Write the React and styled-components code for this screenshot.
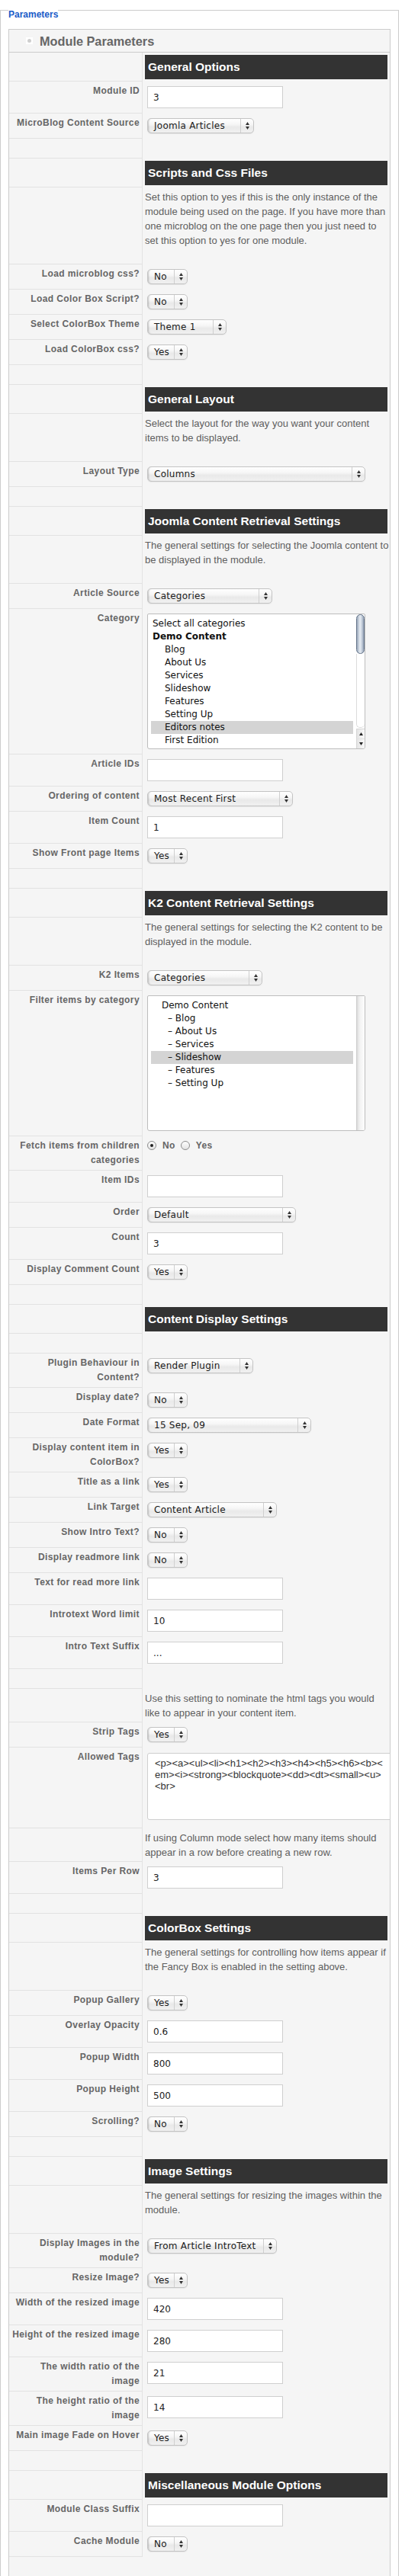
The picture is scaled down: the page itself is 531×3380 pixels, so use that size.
import React from 'react';
import styled, { createGlobalStyle } from 'styled-components';

const GlobalStyle = createGlobalStyle`
  html, body { margin: 0; padding: 0; background: #fff; }
  body { font-family: "Liberation Sans", Arial, sans-serif; }
  * { box-sizing: border-box; }
`;

const Fieldset = styled.fieldset`
  margin: 0 8px 0 0;
  padding: 12px 10px 0 10px;
  border: 1px solid #cccccc;
  border-bottom: none;
  min-width: 0;
`;

const Legend = styled.legend`
  padding: 12px 0 0 0;
  margin: 0;
  font: bold 12px/14px "Liberation Sans", Arial, sans-serif;
  color: #1a5cc8;
  background: #fff;
`;

const Panel = styled.div`
  border: 1px solid #cccccc;
  border-bottom: none;
  background: #f5f5f5;
  padding-bottom: 60px;
`;

const PanelHeader = styled.div`
  height: 30px;
  display: flex;
  align-items: center;
  gap: 9px;
  padding-left: 22px;
  border-bottom: 1px solid #cccccc;
`;

const Bullet = styled.span`
  width: 9px;
  height: 9px;
  background: #fff;
  display: flex;
  align-items: center;
  justify-content: center;
  &::before {
    content: '';
    width: 5px;
    height: 5px;
    border-radius: 50%;
    background: #cfcfcf;
  }
`;

const PanelTitle = styled.h2`
  margin: 0;
  font: bold 16.3px/20px "Liberation Sans", Arial, sans-serif;
  color: #666;
`;

const Row = styled.div`
  display: grid;
  grid-template-columns: 175px 1fr;
`;

const Label = styled.div`
  padding: 3px 3px 3px 3px;
  text-align: right;
  font: bold 12px/19px "Liberation Sans", Arial, sans-serif;
  letter-spacing: 0.4px;
  color: #666;
  border-right: 1px solid #e2e2e2;
  border-bottom: 1px solid #e2e2e2;
  min-height: 26px;
`;

const LabelLine = styled.div`
  white-space: nowrap;
`;

const Value = styled.div`
  display: flex;
  flex-direction: column;
  align-items: flex-start;
  padding: ${p =>
    p.$kind === 'header' ? '3px 3px 3px 3px'
    : p.$kind === 'desc' ? '3px 0 22px 3px'
    : p.$kind === 'note' ? '3px 0 3px 3px'
    : p.$kind === 'empty' ? '0'
    : '6px 0 7px 6px'};
`;

const SectionBar = styled.h3`
  margin: 0;
  align-self: stretch;
  height: 32px;
  background: #333333;
  color: #fff;
  padding-left: 4px;
  font: bold 15.5px/32px "Liberation Sans", Arial, sans-serif;
`;

const DescText = styled.p`
  margin: 0;
  font: 13px/19px "Liberation Sans", Arial, sans-serif;
  color: #5e5e5e;
`;

const DescLine = styled.span`
  display: block;
  white-space: nowrap;
`;

const TextInput = styled.input`
  width: 178px;
  height: 29px;
  margin: 0;
  padding: 0 7px;
  border: 1px solid #cfcfcf;
  background: #fff;
  font: 12px "DejaVu Sans", sans-serif;
  color: #222;
  outline: none;
`;

const SelectBox = styled.div`
  width: ${p => p.$w}px;
  height: 20px;
  display: flex;
  align-items: stretch;
  border: 1px solid #c4c4c4;
  border-radius: 5px;
  background: linear-gradient(#ffffff 0%, #f6f6f6 40%, #e9e9e9 60%, #f1f1f1 100%);
  box-shadow: inset 2px 0 2px -1px rgba(0, 0, 0, 0.2), 0 1px 1px rgba(0, 0, 0, 0.06);
  font: 12px/18px "DejaVu Sans", sans-serif;
  letter-spacing: 0.25px;
  color: #1a1a1a;
  overflow: hidden;
`;

const SelectValue = styled.span`
  flex: 1;
  padding-left: 8px;
  white-space: nowrap;
  overflow: hidden;
`;

const SelectArrow = styled.span`
  width: 17px;
  border-left: 1px solid #cfcfcf;
  display: flex;
  align-items: center;
  justify-content: center;
`;

const ListBox = styled.div`
  width: 286px;
  height: 178px;
  border: 1px solid #bdbdbd;
  border-radius: 2px 2px 3px 3px;
  background: #fff;
  display: flex;
  overflow: hidden;
  font: 12px/17px "DejaVu Sans", sans-serif;
  color: #111;
`;

const ListItems = styled.div`
  flex: 1;
  padding: 4px 4px 0 4px;
  overflow: hidden;
`;

const ListItem = styled.div`
  height: 17px;
  padding-left: ${p => 2 + (p.$indent || 0)}px;
  white-space: nowrap;
  font-weight: ${p => (p.$bold ? 'bold' : 'normal')};
  background: ${p => (p.$selected ? '#d4d4d4' : 'transparent')};
`;

const ScrollColumn = styled.div`
  width: 11px;
  display: flex;
  flex-direction: column;
`;

const ScrollThumb = styled.div`
  height: 52px;
  border: 1px solid #66758a;
  border-radius: 6px;
  background: linear-gradient(to right, #9aa8bb, #e8edf3 45%, #c9d2de 70%, #8f9db1);
`;

const ScrollRest = styled.div`
  flex: 1;
  border-left: 1px solid #dcdcdc;
  border-radius: 0 0 5px 5px;
  border-bottom: 1px solid #dcdcdc;
  margin-bottom: 1px;
`;

const ScrollButton = styled.div`
  height: 13px;
  border-left: 1px solid #d6d6d6;
  border-top: ${p => (p.$first ? '1px solid #d6d6d6' : '1px solid #e2e2e2')};
  background: linear-gradient(to right, #e4e4e4, #fafafa);
  display: flex;
  align-items: center;
  justify-content: center;
`;

const PlainTrack = styled.div`
  width: 11px;
  background: linear-gradient(to right, #c8c8c8 0, #e3e3e3 2px, #f3f3f3 5px, #fdfdfd 100%);
`;

const RadioGroup = styled.div`
  display: flex;
  align-items: center;
  height: 12px;
  font: bold 12px/12px "Liberation Sans", Arial, sans-serif;
  letter-spacing: 0.4px;
  color: #666;
`;

const RadioDot = styled.span`
  width: 12px;
  height: 12px;
  border-radius: 50%;
  border: 1px solid #8c8c8c;
  background: linear-gradient(#fdfdfd, #e3e3e3);
  display: flex;
  align-items: center;
  justify-content: center;
  margin-right: 8px;
  &::after {
    content: '';
    width: 4px;
    height: 4px;
    border-radius: 50%;
    background: ${p => (p.$checked ? '#222' : 'transparent')};
  }
`;

const RadioText = styled.span`
  margin-right: 7px;
`;

const TagsArea = styled.textarea`
  display: block;
  width: 319px;
  height: 88px;
  margin: 1px 0 4px 0;
  padding: 5px 4px 0 9px;
  border: 1px solid #cfcfcf;
  border-radius: 3px 0 0 3px;
  background: #fff;
  font: 13px/15px "Liberation Sans", Arial, sans-serif;
  color: #333;
  resize: none;
  overflow: hidden;
  white-space: pre;
  outline: none;
`;

const Arrows = () => (
  <svg width="5" height="10" viewBox="0 0 5 10">
    <path d="M0 4 L2.5 0 L5 4 Z M0 6 L5 6 L2.5 10 Z" fill="#333" />
  </svg>
);

const Tri = ({ up }) => (
  <svg width="5" height="4" viewBox="0 0 5 4">
    <path d={up ? 'M0 4 L2.5 0 L5 4 Z' : 'M0 0 L5 0 L2.5 4 Z'} fill="#222" />
  </svg>
);

const Select = ({ value, w }) => (
  <SelectBox $w={w}>
    <SelectValue>{value}</SelectValue>
    <SelectArrow><Arrows /></SelectArrow>
  </SelectBox>
);

const joomlaCats = [
  { text: 'Select all categories' },
  { text: 'Demo Content', bold: true },
  { text: 'Blog', indent: 16 },
  { text: 'About Us', indent: 16 },
  { text: 'Services', indent: 16 },
  { text: 'Slideshow', indent: 16 },
  { text: 'Features', indent: 16 },
  { text: 'Setting Up', indent: 16 },
  { text: 'Editors notes', indent: 16, selected: true },
  { text: 'First Edition', indent: 16 },
];

const k2Cats = [
  { text: 'Demo Content', indent: 12 },
  { text: '– Blog', indent: 20 },
  { text: '– About Us', indent: 20 },
  { text: '– Services', indent: 20 },
  { text: '– Slideshow', indent: 20, selected: true },
  { text: '– Features', indent: 20 },
  { text: '– Setting Up', indent: 20 },
];

const rows = [
  { t: 'header', text: 'General Options' },
  { t: 'input', label: ['Module ID'], value: '3' },
  { t: 'select', label: ['MicroBlog Content Source'], value: 'Joomla Articles', w: 140 },
  { t: 'empty' },
  { t: 'header', text: 'Scripts and Css Files' },
  { t: 'desc', lines: [
    'Set this option to yes if this is the only instance of the',
    'module being used on the page. If you have more than',
    'one microblog on the one page then you just need to',
    'set this option to yes for one module.',
  ] },
  { t: 'select', label: ['Load microblog css?'], value: 'No', w: 53 },
  { t: 'select', label: ['Load Color Box Script?'], value: 'No', w: 53 },
  { t: 'select', label: ['Select ColorBox Theme'], value: 'Theme 1', w: 104 },
  { t: 'select', label: ['Load ColorBox css?'], value: 'Yes', w: 53 },
  { t: 'empty' },
  { t: 'header', text: 'General Layout' },
  { t: 'desc', lines: [
    'Select the layout for the way you want your content',
    'items to be displayed.',
  ] },
  { t: 'select', label: ['Layout Type'], value: 'Columns', w: 286 },
  { t: 'empty' },
  { t: 'header', text: 'Joomla Content Retrieval Settings' },
  { t: 'desc', lines: [
    'The general settings for selecting the Joomla content to',
    'be displayed in the module.',
  ] },
  { t: 'select', label: ['Article Source'], value: 'Categories', w: 164 },
  { t: 'list', label: ['Category'], items: joomlaCats, scroll: 'thumb' },
  { t: 'input', label: ['Article IDs'], value: '' },
  { t: 'select', label: ['Ordering of content'], value: 'Most Recent First', w: 191 },
  { t: 'input', label: ['Item Count'], value: '1' },
  { t: 'select', label: ['Show Front page Items'], value: 'Yes', w: 53 },
  { t: 'empty' },
  { t: 'header', text: 'K2 Content Retrieval Settings' },
  { t: 'desc', lines: [
    'The general settings for selecting the K2 content to be',
    'displayed in the module.',
  ] },
  { t: 'select', label: ['K2 Items'], value: 'Categories', w: 151 },
  { t: 'list', label: ['Filter items by category'], items: k2Cats, scroll: 'track' },
  { t: 'radio', label: ['Fetch items from children', 'categories'] },
  { t: 'input', label: ['Item IDs'], value: '' },
  { t: 'select', label: ['Order'], value: 'Default', w: 195 },
  { t: 'input', label: ['Count'], value: '3' },
  { t: 'select', label: ['Display Comment Count'], value: 'Yes', w: 53 },
  { t: 'empty' },
  { t: 'header', text: 'Content Display Settings' },
  { t: 'empty' },
  { t: 'select', label: ['Plugin Behaviour in', 'Content?'], value: 'Render Plugin', w: 139 },
  { t: 'select', label: ['Display date?'], value: 'No', w: 53 },
  { t: 'select', label: ['Date Format'], value: '15 Sep, 09', w: 215 },
  { t: 'select', label: ['Display content item in', 'ColorBox?'], value: 'Yes', w: 53 },
  { t: 'select', label: ['Title as a link'], value: 'Yes', w: 53 },
  { t: 'select', label: ['Link Target'], value: 'Content Article', w: 170 },
  { t: 'select', label: ['Show Intro Text?'], value: 'No', w: 53 },
  { t: 'select', label: ['Display readmore link'], value: 'No', w: 53 },
  { t: 'input', label: ['Text for read more link'], value: '' },
  { t: 'input', label: ['Introtext Word limit'], value: '10' },
  { t: 'input', label: ['Intro Text Suffix'], value: '...' },
  { t: 'empty' },
  { t: 'note', lines: [
    'Use this setting to nominate the html tags you would',
    'like to appear in your content item.',
  ] },
  { t: 'select', label: ['Strip Tags'], value: 'Yes', w: 53 },
  { t: 'textarea', label: ['Allowed Tags'], value: '<p><a><ul><li><h1><h2><h3><h4><h5><h6><b><\nem><i><strong><blockquote><dd><dt><small><u>\n<br>' },
  { t: 'note', lines: [
    'If using Column mode select how many items should',
    'appear in a row before creating a new row.',
  ] },
  { t: 'input', label: ['Items Per Row'], value: '3' },
  { t: 'empty' },
  { t: 'header', text: 'ColorBox Settings' },
  { t: 'desc', lines: [
    'The general settings for controlling how items appear if',
    'the Fancy Box is enabled in the setting above.',
  ] },
  { t: 'select', label: ['Popup Gallery'], value: 'Yes', w: 53 },
  { t: 'input', label: ['Overlay Opacity'], value: '0.6' },
  { t: 'input', label: ['Popup Width'], value: '800' },
  { t: 'input', label: ['Popup Height'], value: '500' },
  { t: 'select', label: ['Scrolling?'], value: 'No', w: 53 },
  { t: 'empty' },
  { t: 'header', text: 'Image Settings' },
  { t: 'desc', lines: [
    'The general settings for resizing the images within the',
    'module.',
  ] },
  { t: 'select', label: ['Display Images in the', 'module?'], value: 'From Article IntroText', w: 170 },
  { t: 'select', label: ['Resize Image?'], value: 'Yes', w: 53 },
  { t: 'input', label: ['Width of the resized image'], value: '420' },
  { t: 'input', label: ['Height of the resized image'], value: '280' },
  { t: 'input', label: ['The width ratio of the', 'image'], value: '21' },
  { t: 'input', label: ['The height ratio of the', 'image'], value: '14' },
  { t: 'select', label: ['Main image Fade on Hover'], value: 'Yes', w: 53 },
  { t: 'empty' },
  { t: 'header', text: 'Miscellaneous Module Options' },
  { t: 'input', label: ['Module Class Suffix'], value: '' },
  { t: 'select', label: ['Cache Module'], value: 'No', w: 53 },
];

const renderValue = (r) => {
  switch (r.t) {
    case 'header':
      return <SectionBar>{r.text}</SectionBar>;
    case 'desc':
    case 'note':
      return (
        <DescText>
          {r.lines.map((l, i) => <DescLine key={i}>{l}</DescLine>)}
        </DescText>
      );
    case 'input':
      return <TextInput type="text" value={r.value} readOnly />;
    case 'select':
      return <Select value={r.value} w={r.w} />;
    case 'list':
      return (
        <ListBox>
          <ListItems>
            {r.items.map((it, i) => (
              <ListItem key={i} $indent={it.indent} $bold={it.bold} $selected={it.selected}>
                {it.text}
              </ListItem>
            ))}
          </ListItems>
          {r.scroll === 'thumb' ? (
            <ScrollColumn>
              <ScrollThumb />
              <ScrollRest />
              <ScrollButton $first><Tri up /></ScrollButton>
              <ScrollButton><Tri /></ScrollButton>
            </ScrollColumn>
          ) : (
            <PlainTrack />
          )}
        </ListBox>
      );
    case 'radio':
      return (
        <RadioGroup>
          <RadioDot $checked />
          <RadioText>No</RadioText>
          <RadioDot />
          <RadioText>Yes</RadioText>
        </RadioGroup>
      );
    case 'textarea':
      return <TagsArea value={r.value} readOnly wrap="off" />;
    default:
      return null;
  }
};

export default function App() {
  return (
    <>
      <GlobalStyle />
      <Fieldset>
        <Legend>Parameters</Legend>
        <Panel>
          <PanelHeader>
            <Bullet />
            <PanelTitle>Module Parameters</PanelTitle>
          </PanelHeader>
          {rows.map((r, i) => (
            <Row key={i}>
              <Label>
                {r.label
                  ? r.label.map((l, j) => <LabelLine key={j}>{l}</LabelLine>)
                  : '\u00a0'}
              </Label>
              <Value $kind={r.t === 'empty' ? 'empty' : r.t}>{renderValue(r)}</Value>
            </Row>
          ))}
        </Panel>
      </Fieldset>
    </>
  );
}
